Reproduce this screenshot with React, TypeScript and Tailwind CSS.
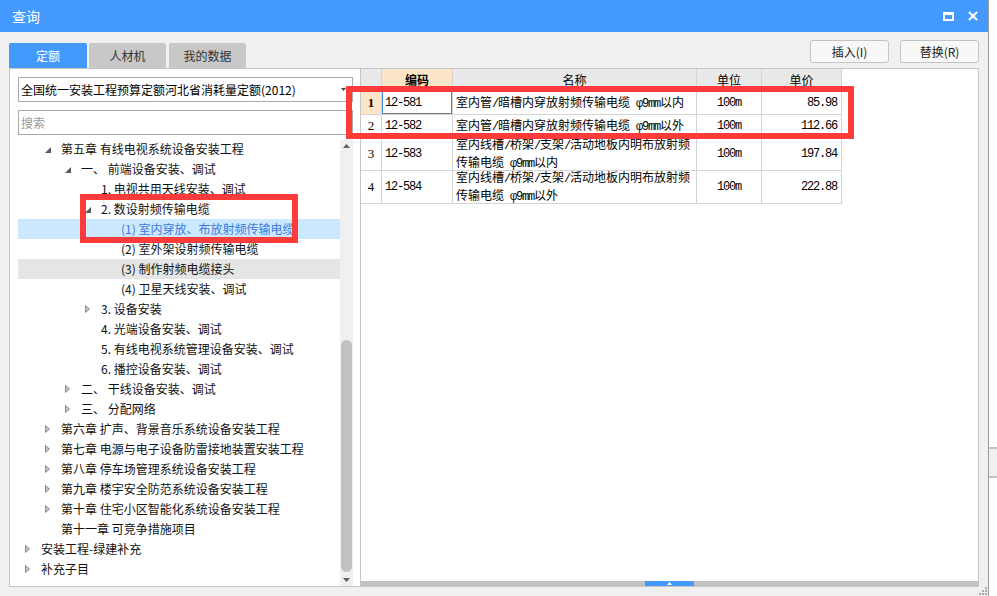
import React from "react";

type TreeNode = {
    level: number;
    text: string;
    state?: "open" | "closed";
    selected?: boolean;
    hover?: boolean;
};

const tree: TreeNode[] = [
    { level: 1, text: "第五章 有线电视系统设备安装工程", state: "open" },
    { level: 2, text: "一、 前端设备安装、调试", state: "open" },
    { level: 3, text: "1. 电视共用天线安装、调试" },
    { level: 3, text: "2. 数设射频传输电缆", state: "open" },
    { level: 4, text: "(1) 室内穿放、布放射频传输电缆", selected: true },
    { level: 4, text: "(2) 室外架设射频传输电缆" },
    { level: 4, text: "(3) 制作射频电缆接头", hover: true },
    { level: 4, text: "(4) 卫星天线安装、调试" },
    { level: 3, text: "3. 设备安装", state: "closed" },
    { level: 3, text: "4. 光端设备安装、调试" },
    { level: 3, text: "5. 有线电视系统管理设备安装、调试" },
    { level: 3, text: "6. 播控设备安装、调试" },
    { level: 2, text: "二、 干线设备安装、调试", state: "closed" },
    { level: 2, text: "三、 分配网络", state: "closed" },
    { level: 1, text: "第六章 扩声、背景音乐系统设备安装工程", state: "closed" },
    { level: 1, text: "第七章 电源与电子设备防雷接地装置安装工程", state: "closed" },
    { level: 1, text: "第八章 停车场管理系统设备安装工程", state: "closed" },
    { level: 1, text: "第九章 楼宇安全防范系统设备安装工程", state: "closed" },
    { level: 1, text: "第十章 住宅小区智能化系统设备安装工程", state: "closed" },
    { level: 1, text: "第十一章 可竞争措施项目" },
    { level: 0, text: "安装工程-绿建补充", state: "closed" },
    { level: 0, text: "补充子目", state: "closed" },
];

const indent = ["pl-[6px]", "pl-[26px]", "pl-[46px]", "pl-[66px]", "pl-[86px]"];

const rows = [
    { no: "1", code: "12-581", name: ["室内管/暗槽内穿放射频传输电缆 φ9mm以内"], unit: "100m", price: "85.98", tall: false },
    { no: "2", code: "12-582", name: ["室内管/暗槽内穿放射频传输电缆 φ9mm以外"], unit: "100m", price: "112.66", tall: false },
    { no: "3", code: "12-583", name: ["室内线槽/桥架/支架/活动地板内明布放射频", "传输电缆 φ9mm以内"], unit: "100m", price: "197.84", tall: true },
    { no: "4", code: "12-584", name: ["室内线槽/桥架/支架/活动地板内明布放射频", "传输电缆 φ9mm以外"], unit: "100m", price: "222.88", tall: true },
];

const mono = "font-['Liberation_Mono',monospace] text-[12px] tracking-[-1.2px]";

// half-width parts look like a fixed-width song font in the original
const Mixed = ({ s }: { s: string }) => (
    <>
        {s.split(/([ -~φ]+)/).map((p, i) =>
            /[ -~φ]/.test(p) ? (
                <span key={i} className={mono}>
                    {p}
                </span>
            ) : (
                <span key={i}>{p}</span>
            )
        )}
    </>
);

const Arrow = ({ state }: { state?: "open" | "closed" }) => (
    <svg width="10" height="20" className="mr-[7px] shrink-0">
        {state === "open" && <polygon points="1,14 7,14 7,8" fill="#595959" />}
        {state === "closed" && <polygon points="1.5,6.5 5.5,10 1.5,13.5" fill="#c4c4c4" stroke="#8c8c8c" strokeWidth="1" />}
    </svg>
);

const cell = "flex items-center border-r border-b border-[#d4d4d4]";

export default function App() {
    return (
        <div className="relative flex h-[596px] w-[997px] overflow-hidden bg-white font-['Noto_Sans_CJK_SC',sans-serif]">
            <div className="flex h-full w-[989px] flex-col border-r border-[#9a9a9a]">
                {/* title */}
                <div className="flex h-[32px] shrink-0 items-center justify-between bg-[#4499fe] pl-[12px] pr-[10px]">
                    <span className="text-[14px] text-white">查询</span>
                    <div className="flex items-center gap-[14px]">
                        <svg width="11" height="9">
                            <path d="M0 0h11v9H0z M2 3h7v4H2z" fill="white" fillRule="evenodd" />
                        </svg>
                        <svg width="10" height="10">
                            <path d="M1 1L9 9M9 1L1 9" stroke="white" strokeWidth="2.2" />
                        </svg>
                    </div>
                </div>

                <div className="flex flex-1 flex-col bg-[#f0f0f0] pl-[9px]">
                    {/* tabs + buttons */}
                    <div className="mr-[9px] flex h-[36px] shrink-0 items-end justify-between">
                        <div className="flex items-end gap-[2px] text-[12px]">
                            <div className="flex h-[25px] w-[78px] items-center justify-center rounded-t-[2px] bg-[#4499fe] text-white">定额</div>
                            <div className="flex h-[25px] w-[77px] items-center justify-center rounded-t-[2px] bg-[#c8c8c8] text-[#333]">人材机</div>
                            <div className="ml-[1px] flex h-[25px] w-[77px] items-center justify-center rounded-t-[2px] bg-[#c8c8c8] text-[#333]">我的数据</div>
                        </div>
                        <div className="mb-[5px] flex gap-[11px] text-[12px] text-[#222]">
                            <button className="h-[23px] w-[79px] rounded-[3px] border border-[#c4c4c4] bg-[#f8f8f8]">插入(I)</button>
                            <button className="h-[23px] w-[79px] rounded-[3px] border border-[#c4c4c4] bg-[#f8f8f8]">替换(R)</button>
                        </div>
                    </div>

                    {/* panels */}
                    <div className="mr-[9px] flex h-[519px] shrink-0">
                        <div className="flex w-[352px] flex-col border border-[#c6c6c6] bg-white pl-[8px] pr-[7px] pt-[8px]">
                            <div className="relative flex h-[25px] items-center border border-[#a9a9a9] pl-[2px] text-[12px] text-black">
                                全国统一安装工程预算定额河北省消耗量定额(2012)
                                <svg width="5" height="3" className="absolute right-[6px] top-[10px]">
                                    <polygon points="0,0 5,0 2.5,3" fill="#444" />
                                </svg>
                            </div>
                            <div className="mt-[8px] flex h-[25px] items-center border border-[#a9a9a9] pl-[2px] text-[12px] text-[#9a9a9a]">
                                搜索
                            </div>
                            <div className="mt-[4px] flex h-[447px]">
                                <div className="w-[322px]">
                                    {tree.map((n, i) => (
                                        <div
                                            key={i}
                                            className={`flex h-[20px] items-center overflow-hidden whitespace-nowrap text-[12px] ${indent[n.level]} ${
                                                n.selected ? "bg-[#cce8ff] text-[#3c7ae0]" : n.hover ? "bg-[#e5e5e5] text-[#111]" : "text-[#111]"
                                            }`}
                                        >
                                            <Arrow state={n.state} />
                                            <span>{n.text}</span>
                                        </div>
                                    ))}
                                </div>
                                <div className="mt-[1px] flex w-[13px] flex-col bg-[#f0f0f0]">
                                    <div className="flex h-[12px] items-center justify-center">
                                        <svg width="7" height="4">
                                            <polygon points="0,4 7,4 3.5,0" fill="#606060" />
                                        </svg>
                                    </div>
                                    <div className="h-[188px]" />
                                    <div className="mx-[1px] h-[232px] rounded-full bg-[#c1c1c1]" />
                                    <div className="flex-1" />
                                    <div className="flex h-[12px] items-center justify-center">
                                        <svg width="7" height="4">
                                            <polygon points="0,0 7,0 3.5,4" fill="#606060" />
                                        </svg>
                                    </div>
                                </div>
                            </div>
                        </div>

                        <div className="flex flex-1 flex-col border-y border-r border-[#c6c6c6] bg-white">
                            <div className="grid w-[481px] grid-cols-[21px_71px_244px_65px_80px] text-[12px] text-black">
                                <div className={`${cell} h-[23px] bg-[#e9e9e9]`} />
                                <div className={`${cell} h-[23px] justify-center bg-[#fde5c8] font-bold`}>编码</div>
                                <div className={`${cell} h-[23px] justify-center bg-[#e9e9e9]`}>名称</div>
                                <div className={`${cell} h-[23px] justify-center bg-[#e9e9e9]`}>单位</div>
                                <div className={`${cell} h-[23px] justify-center bg-[#e9e9e9]`}>单价</div>
                                {rows.map((r, i) => {
                                    const h = r.tall ? "h-[33px]" : "h-[23px]";
                                    return (
                                        <React.Fragment key={r.no}>
                                            <div
                                                className={`${cell} ${h} justify-center font-['Liberation_Serif',serif] text-[13px] ${
                                                    i === 0 ? "bg-[#fde5c8] font-bold" : "bg-white"
                                                }`}
                                            >
                                                {r.no}
                                            </div>
                                            <div
                                                className={`${cell} ${h} pl-[3px] ${mono} ${
                                                    i === 0 ? "shadow-[inset_1px_0_0_#3d8ee8,inset_-1px_-1px_0_#7a7a7a]" : ""
                                                }`}
                                            >
                                                {r.code}
                                            </div>
                                            <div className={`${cell} ${h} flex-col !items-start justify-center pl-[3px] leading-[16px]`}>
                                                {r.name.map((l, j) => (
                                                    <div key={j} className="whitespace-nowrap">
                                                        <Mixed s={l} />
                                                    </div>
                                                ))}
                                            </div>
                                            <div className={`${cell} ${h} justify-center ${mono}`}>{r.unit}</div>
                                            <div className={`${cell} ${h} justify-end pr-[4px] ${mono}`}>{r.price}</div>
                                        </React.Fragment>
                                    );
                                })}
                            </div>
                            <div className="flex-1" />
                            <div className="flex h-[5px] bg-[#c2c2c2]">
                                <div className="ml-[284px] flex w-[49px] items-center justify-center bg-[#4499fe]">
                                    <svg width="5" height="3">
                                        <polygon points="0,3 5,3 2.5,0" fill="white" />
                                    </svg>
                                </div>
                            </div>
                        </div>
                    </div>

                    <div className="flex flex-1 items-end justify-end pr-[1px]">
                        <svg width="10" height="9">
                            <g fill="#a8a8a8">
                                <rect x="8" y="0" width="2" height="2" />
                                <rect x="5" y="3" width="2" height="2" />
                                <rect x="8" y="3" width="2" height="2" />
                                <rect x="2" y="6" width="2" height="2" />
                                <rect x="5" y="6" width="2" height="2" />
                                <rect x="8" y="6" width="2" height="2" />
                            </g>
                        </svg>
                    </div>
                </div>
            </div>

            <div className="flex flex-1 flex-col bg-white">
                <div className="h-[447px]" />
                <div className="h-[31px] border-y-2 border-[#c4c4c4] bg-[#f0f0f0]" />
            </div>

            {/* annotation boxes */}
            <div className="absolute left-[80px] top-[194px] h-[49px] w-[218px] border-[6px] border-[#fe3b3b]" />
            <div className="absolute left-[346px] top-[86px] h-[53px] w-[508px] border-[6px] border-[#fe3b3b]" />
        </div>
    );
}
